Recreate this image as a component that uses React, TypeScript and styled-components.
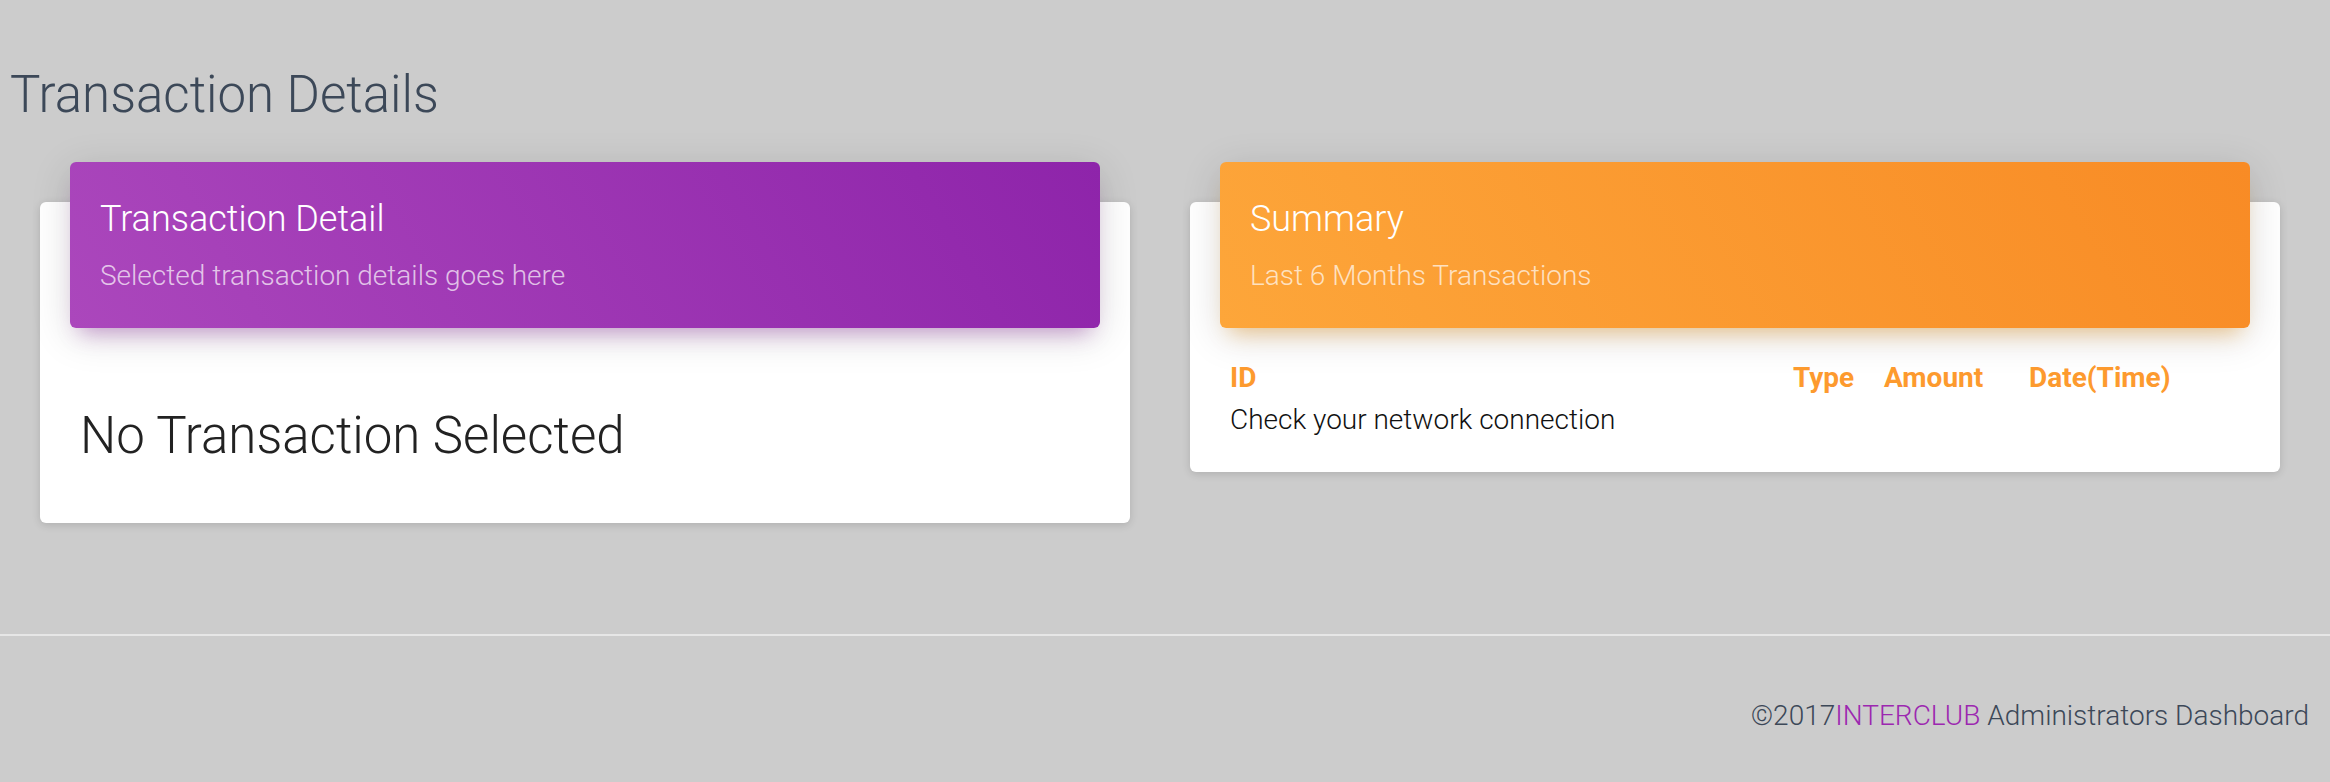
import React from "react";
import styled, { createGlobalStyle } from "styled-components";

const GlobalStyle = createGlobalStyle`
  html, body {
    margin: 0;
    padding: 0;
    background: #cccccc;
  }
  body {
    font-family: Roboto, "Helvetica Neue", Arial, sans-serif;
    color: #3c4858;
    -webkit-font-smoothing: antialiased;
  }
  * { box-sizing: border-box; }
`;

const Page = styled.div`
  width: 2330px;
  min-height: 782px;
  display: flex;
  flex-direction: column;
`;

const Content = styled.main`
  padding: 0 50px 111px 0;
`;

const PageTitle = styled.h3`
  margin: 64px 0 0 10px;
  font-size: 51px;
  line-height: 62px;
  font-weight: 300;
  color: #3c4858;
`;

const CardRow = styled.div`
  display: grid;
  grid-template-columns: 1090px 1090px;
  column-gap: 60px;
  padding-left: 40px;
  margin-top: 76px;
  align-items: start;
`;

const Card = styled.section`
  display: flex;
  flex-direction: column;
  background: #ffffff;
  border-radius: 6px;
  box-shadow: 0 2px 8px 0 rgba(0, 0, 0, 0.14);
`;

const headerThemes = {
  purple: {
    bg: "linear-gradient(60deg, #ab47bc, #8e24aa)",
    glow: "rgba(156, 39, 176, 0.4)",
  },
  orange: {
    bg: "linear-gradient(60deg, #fda63a, #f88b25)",
    glow: "rgba(255, 152, 0, 0.4)",
  },
};

const CardHeader = styled.header<{ $tone: "purple" | "orange" }>`
  margin: -40px 30px 0;
  padding: 35px 30px 34px;
  border-radius: 6px;
  background: ${(p) => headerThemes[p.$tone].bg};
  box-shadow: 0 8px 40px 0 rgba(0, 0, 0, 0.14),
    0 14px 20px -10px ${(p) => headerThemes[p.$tone].glow};
  color: #ffffff;
`;

const CardTitle = styled.h4`
  margin: 0;
  font-size: 36px;
  line-height: 44px;
  font-weight: 300;
  color: #ffffff;
`;

const CardCategory = styled.p`
  margin: 17px 0 0;
  font-size: 28px;
  line-height: 36px;
  font-weight: 300;
  color: rgba(255, 255, 255, 0.7);
`;

const CardBody = styled.div<{ $pb: number }>`
  padding: 0 40px ${(p) => p.$pb}px;
`;

const EmptyState = styled.h3`
  margin: 77px 0 0;
  font-size: 51px;
  line-height: 62px;
  font-weight: 300;
  color: #222222;
`;

const Table = styled.div`
  margin-top: 29px;
  display: grid;
  grid-template-columns: 563px 91px 145px 1fr;
`;

const HeadCell = styled.div`
  height: 42px;
  font-size: 28px;
  line-height: 42px;
  font-weight: 700;
  color: #fd9a2e;
`;

const MessageCell = styled.div`
  grid-column: 1 / -1;
  height: 42px;
  font-size: 28px;
  line-height: 42px;
  font-weight: 300;
  color: #111111;
`;

const Footer = styled.footer`
  border-top: 2px solid #e6e6e6;
  padding: 60px 21px 46px 0;
  display: flex;
  justify-content: flex-end;
`;

const Copyright = styled.p`
  margin: 0;
  font-size: 28px;
  line-height: 40px;
  font-weight: 300;
  color: #3c4858;
`;

const Brand = styled.span`
  color: #9c27b0;
`;

export default function App() {
  return (
    <Page>
      <GlobalStyle />
      <Content>
        <PageTitle>Transaction Details</PageTitle>
        <CardRow>
          <Card>
            <CardHeader $tone="purple">
              <CardTitle>Transaction Detail</CardTitle>
              <CardCategory>Selected transaction details goes here</CardCategory>
            </CardHeader>
            <CardBody $pb={56}>
              <EmptyState>No Transaction Selected</EmptyState>
            </CardBody>
          </Card>
          <Card>
            <CardHeader $tone="orange">
              <CardTitle>Summary</CardTitle>
              <CardCategory>Last 6 Months Transactions</CardCategory>
            </CardHeader>
            <CardBody $pb={31}>
              <Table>
                <HeadCell>ID</HeadCell>
                <HeadCell>Type</HeadCell>
                <HeadCell>Amount</HeadCell>
                <HeadCell>Date(Time)</HeadCell>
                <MessageCell>Check your network connection</MessageCell>
              </Table>
            </CardBody>
          </Card>
        </CardRow>
      </Content>
      <Footer>
        <Copyright>
          ©2017<Brand>INTERCLUB</Brand> Administrators Dashboard
        </Copyright>
      </Footer>
    </Page>
  );
}
